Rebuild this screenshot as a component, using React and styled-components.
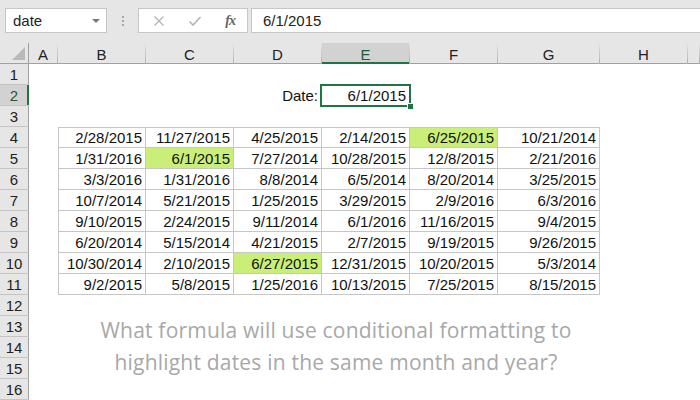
import React from 'react'
import styled, { createGlobalStyle } from 'styled-components'

const GlobalStyle = createGlobalStyle`
  html, body { margin: 0; padding: 0; background: #fff; }
  body { font-family: "Liberation Sans", Arial, sans-serif; }
`

const GREEN = '#217346'
const COLS = ['A', 'B', 'C', 'D', 'E', 'F', 'G', 'H', '']
const TABLE_COLS = ['B', 'C', 'D', 'E', 'F', 'G']

// rows 4..11, columns B..G
const DATA = [
  ['2/28/2015', '11/27/2015', '4/25/2015', '2/14/2015', '6/25/2015', '10/21/2014'],
  ['1/31/2016', '6/1/2015', '7/27/2014', '10/28/2015', '12/8/2015', '2/21/2016'],
  ['3/3/2016', '1/31/2016', '8/8/2014', '6/5/2014', '8/20/2014', '3/25/2015'],
  ['10/7/2014', '5/21/2015', '1/25/2015', '3/29/2015', '2/9/2016', '6/3/2016'],
  ['9/10/2015', '2/24/2015', '9/11/2014', '6/1/2016', '11/16/2015', '9/4/2015'],
  ['6/20/2014', '5/15/2014', '4/21/2015', '2/7/2015', '9/19/2015', '9/26/2015'],
  ['10/30/2014', '2/10/2015', '6/27/2015', '12/31/2015', '10/20/2015', '5/3/2014'],
  ['9/2/2015', '5/8/2015', '1/25/2016', '10/13/2015', '7/25/2015', '8/15/2015'],
]

const isSameMonth = (v) => /^6\/\d+\/2015$/.test(v)

export default function App() {
  const rows = Array.from({ length: 16 }, (_, i) => i + 1)

  const renderCell = (r, c) => {
    const key = `${c}${r}`
    if (r === 2 && c === 'D') return <Cell key={key}>Date:</Cell>
    if (r === 2 && c === 'E') return <Cell key={key} $selected>6/1/2015</Cell>
    const ci = TABLE_COLS.indexOf(c)
    if (r >= 4 && r <= 11 && ci >= 0) {
      const v = DATA[r - 4][ci]
      return (
        <TableCell key={key} $top={r === 4} $left={ci === 0} $hl={isSameMonth(v)}>
          {v}
        </TableCell>
      )
    }
    return <Cell key={key} />
  }

  return (
    <Page>
      <GlobalStyle />
      <FormulaBar>
        <NameBox>
          <span>date</span>
          <Caret />
        </NameBox>
        <Grip>
          <i /><i /><i />
        </Grip>
        <FxButtons>
          <svg width="12" height="12" viewBox="0 0 12 12">
            <path d="M1.5 1.5 L10.5 10.5 M10.5 1.5 L1.5 10.5" stroke="#b4b4b4" strokeWidth="1.3" fill="none" />
          </svg>
          <svg width="14" height="12" viewBox="0 0 14 12">
            <path d="M1.5 6.5 L5 10 L12.5 2" stroke="#b4b4b4" strokeWidth="1.6" fill="none" />
          </svg>
          <FxLabel>fx</FxLabel>
        </FxButtons>
        <FormulaInput>6/1/2015</FormulaInput>
      </FormulaBar>

      <Sheet>
        <Corner />
        {COLS.map((c, i) => (
          <ColHead key={`h${i}`} $active={c === 'E'}>{c}</ColHead>
        ))}
        {rows.map((r) => (
          <React.Fragment key={r}>
            <RowHead $active={r === 2}>{r}</RowHead>
            {COLS.map((c, i) => renderCell(r, c || `X${i}`))}
          </React.Fragment>
        ))}
        <Note>
          What formula will use conditional formatting to
          <br />
          highlight dates in the same month and year?
        </Note>
      </Sheet>
    </Page>
  )
}

const Page = styled.div`
  width: 700px;
  height: 400px;
  overflow: hidden;
  background: #fff;
  display: flex;
  flex-direction: column;
`

const FormulaBar = styled.div`
  height: 43px;
  flex: none;
  box-sizing: border-box;
  background: #e6e6e6;
  display: flex;
  align-items: flex-start;
  padding: 8px 0 0 5px;
`

const Box = styled.div`
  box-sizing: border-box;
  height: 25px;
  background: #fff;
  border: 1px solid #c6c6c6;
  display: flex;
  align-items: center;
  font-size: 15px;
  color: #222;
`

const NameBox = styled(Box)`
  width: 102px;
  padding: 0 6px 0 7px;
  justify-content: space-between;
`

const Caret = styled.span`
  width: 0;
  height: 0;
  border-left: 4px solid transparent;
  border-right: 4px solid transparent;
  border-top: 4px solid #777;
  margin-top: 1px;
`

const Grip = styled.div`
  width: 31px;
  height: 25px;
  display: flex;
  flex-direction: column;
  align-items: center;
  justify-content: center;
  gap: 2px;

  i {
    display: block;
    width: 2px;
    height: 2px;
    background: #a8a8a8;
  }
`

const FxButtons = styled(Box)`
  width: 110px;
  padding: 0 12px 0 14px;
  justify-content: space-between;
`

const FxLabel = styled.span`
  font-family: "Liberation Serif", "Times New Roman", serif;
  font-style: italic;
  font-weight: bold;
  font-size: 14px;
  color: #666;
  letter-spacing: -1px;
`

const FormulaInput = styled(Box)`
  flex: 1;
  margin-left: 3px;
  border-right: none;
  padding-left: 11px;
`

const Sheet = styled.div`
  position: relative;
  flex: 1;
  display: grid;
  grid-template-columns: 29px 29px 88px 88px 88px 88px 88px 102px 88px 1fr;
  grid-auto-rows: 21px;
  font-size: 15px;
  color: #111;
`

const Corner = styled.div`
  background: #e6e6e6;
  border-right: 1px solid #a0a0a0;
  border-bottom: 1px solid #a0a0a0;
  box-sizing: border-box;
  display: flex;
  align-items: flex-end;
  justify-content: flex-end;
  padding: 0 3px 3px 0;

  &::before {
    content: '';
    width: 0;
    height: 0;
    border-left: 13px solid transparent;
    border-bottom: 13px solid #b9b9b9;
  }
`

const ColHead = styled.div`
  box-sizing: border-box;
  background: ${(p) => (p.$active ? '#d2d2d2' : '#e6e6e6')};
  border-style: solid;
  border-width: 0 1px 0 0;
  border-image: linear-gradient(#e6e6e6, #ababab) 1;
  box-shadow: inset 0 ${(p) => (p.$active ? '-2px 0 ' + GREEN : '-1px 0 #a0a0a0')};
  display: flex;
  align-items: center;
  justify-content: center;
  padding-top: 1px;
  font-size: 15px;
  color: ${(p) => (p.$active ? '#1d5a3a' : '#222')};
`

const RowHead = styled.div`
  box-sizing: border-box;
  background: ${(p) => (p.$active ? '#d2d2d2' : '#e6e6e6')};
  border-bottom: 1px solid #c4c4c4;
  box-shadow: inset ${(p) => (p.$active ? '-2px 0 0 ' + GREEN : '-1px 0 0 #a0a0a0')};
  display: flex;
  align-items: center;
  justify-content: center;
  padding: 1px 1px 0 0;
  font-size: 15px;
  color: ${(p) => (p.$active ? '#1d5a3a' : '#222')};
`

const Cell = styled.div`
  position: relative;
  box-sizing: border-box;
  text-align: right;
  padding: 0 4px;
  line-height: 22px;
  white-space: nowrap;

  ${(p) =>
    p.$selected &&
    `
    &::before {
      content: '';
      position: absolute;
      top: -1px;
      left: -2px;
      right: -1px;
      bottom: -1px;
      border: 2px solid ${GREEN};
    }
    &::after {
      content: '';
      position: absolute;
      right: -4px;
      bottom: -4px;
      width: 5px;
      height: 5px;
      background: ${GREEN};
      border: 1px solid #fff;
    }
  `}
`

const TableCell = styled(Cell)`
  background: ${(p) => (p.$hl ? '#c9ef78' : '#fff')};
  border-right: 1px solid #c6c6c6;
  border-bottom: 1px solid #c6c6c6;
  border-top: ${(p) => (p.$top ? '1px solid #c6c6c6' : 'none')};
  border-left: ${(p) => (p.$left ? '1px solid #c6c6c6' : 'none')};
  line-height: ${(p) => (p.$top ? '20px' : '21px')};
  padding-right: 3px;
`

const Note = styled.div`
  position: absolute;
  top: 271px;
  left: 76px;
  width: 520px;
  text-align: center;
  font-family: "Open Sans", "Noto Sans", sans-serif;
  font-size: 21px;
  line-height: 32px;
  color: #a8a8a8;
  letter-spacing: 0.2px;
`
